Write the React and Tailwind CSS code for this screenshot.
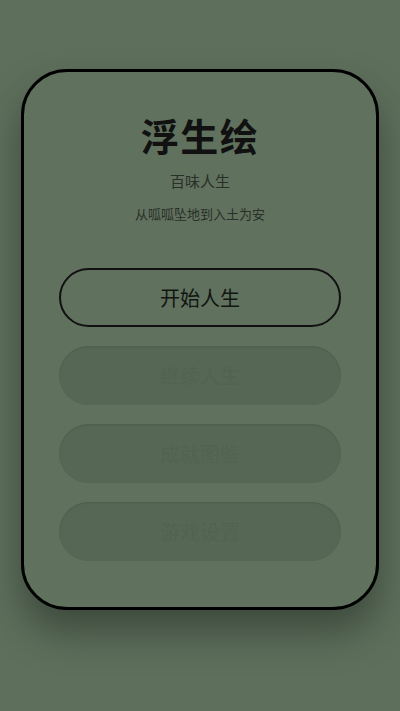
export default function App() {
  const font = { fontFamily: '"Noto Sans CJK SC", "Noto Sans", sans-serif' };
  return (
    <div className="w-[400px] h-[711px] bg-[#5e6f5c] flex flex-col items-center pt-[69px]" style={font}>
      <div className="w-[358px] h-[541px] rounded-[46px] border-[3px] border-black bg-[#60715e] shadow-[0_22px_36px_rgba(30,40,30,0.5)] flex flex-col items-center">
        <div className="mt-[38px] text-[38px] leading-[50px] font-bold tracking-[1.5px] text-[#111]">浮生绘</div>
        <div className="mt-[11px] text-[15px] leading-[20px] text-[#2a2f29]">百味人生</div>
        <div className="mt-[14px] text-[13px] leading-[18px] text-[#2a2f29]">从呱呱坠地到入土为安</div>
        <div className="mt-[45px] w-[282px] flex flex-col gap-[19px]">
          <div className="h-[59px] rounded-full border-[2.5px] border-[#111] flex items-center justify-center text-[20px] text-[#121512]">开始人生</div>
          <div className="h-[59px] rounded-full bg-[#576755] shadow-[inset_0_1px_2px_rgba(0,0,0,0.1)] flex items-center justify-center text-[20px] text-[#536351]">继续人生</div>
          <div className="h-[59px] rounded-full bg-[#576755] shadow-[inset_0_1px_2px_rgba(0,0,0,0.1)] flex items-center justify-center text-[20px] text-[#536351]">成就图鉴</div>
          <div className="h-[59px] rounded-full bg-[#576755] shadow-[inset_0_1px_2px_rgba(0,0,0,0.1)] flex items-center justify-center text-[20px] text-[#536351]">游戏设置</div>
        </div>
      </div>
    </div>
  );
}
